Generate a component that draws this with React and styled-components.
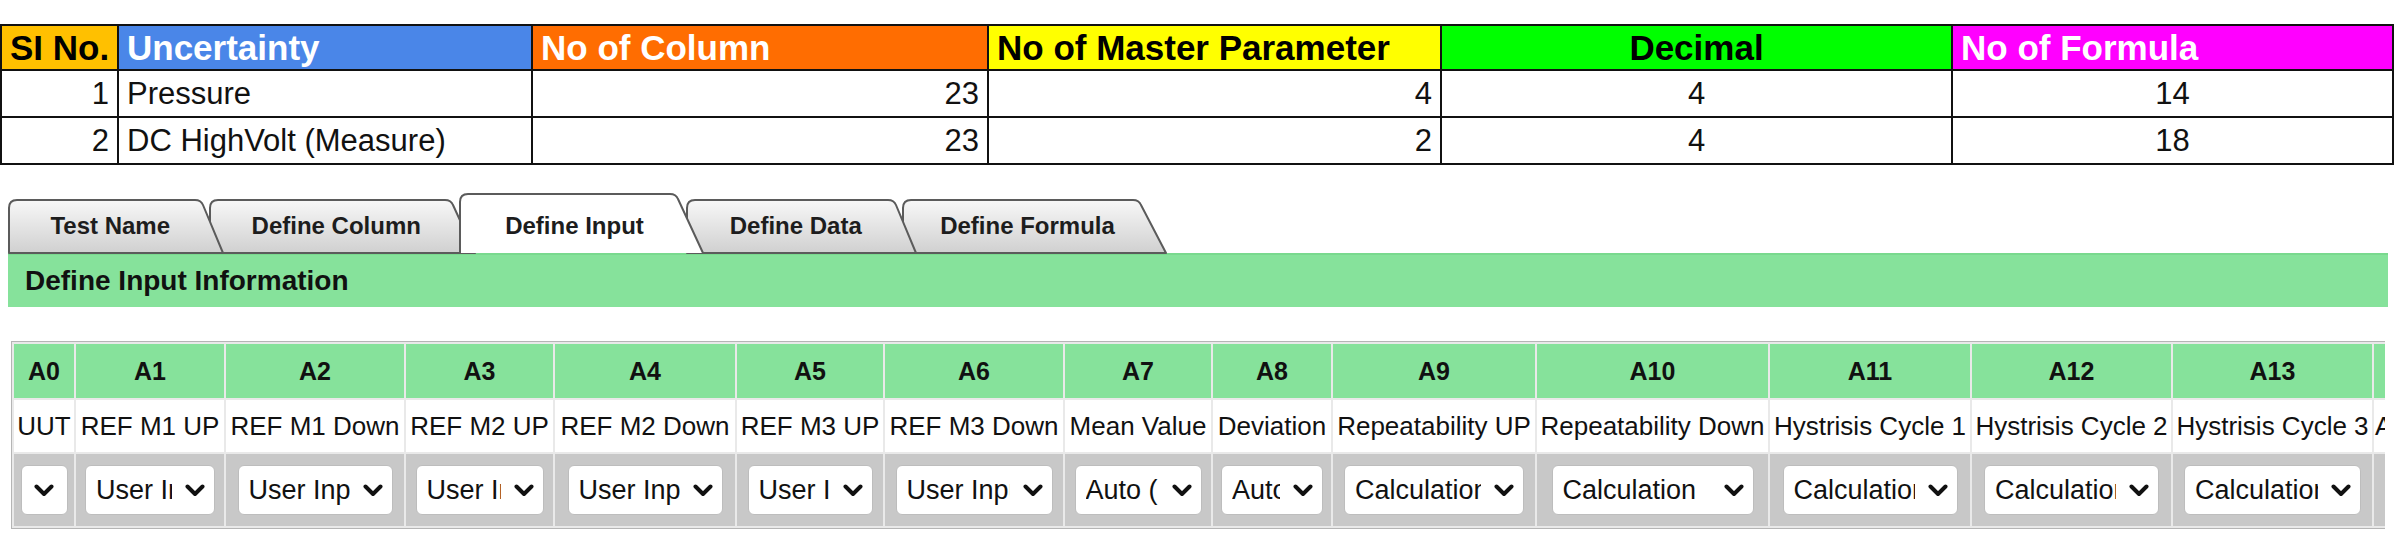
import styled, { createGlobalStyle } from "styled-components";

const GlobalStyle = createGlobalStyle`
  body {
    margin: 0;
    background: #fff;
    color: #111;
    font-family: "Liberation Sans", Arial, sans-serif;
  }
`;

const Page = styled.div`
  width: 2400px;
  padding-top: 24px;
`;

/* summary table */
const Summary = styled.table`
  width: 2392px;
  border-collapse: collapse;
  table-layout: fixed;
`;
const HeadCell = styled.th`
  box-sizing: border-box;
  width: ${(p) => p.$w}px;
  height: 45px;
  padding: 0 8px;
  border: 2px solid #111;
  background: ${(p) => p.$bg};
  color: ${(p) => p.$fg};
  text-align: ${(p) => p.$align || "left"};
  font-size: 35px;
  font-weight: bold;
  line-height: 1;
  white-space: nowrap;
  overflow: hidden;
`;
const Cell = styled.td`
  height: 45px;
  padding: 0 8px;
  border: 2px solid #111;
  text-align: ${(p) => p.$align || "left"};
  font-size: 31px;
  line-height: 1;
  white-space: nowrap;
`;

/* tabs */
const TabBar = styled.div`
  display: flex;
  align-items: flex-end;
  height: 60px;
  margin-top: 28px;
  padding-left: 8px;
`;
const TabItem = styled.div`
  position: relative;
  flex: none;
  box-sizing: border-box;
  width: ${(p) => p.$w}px;
  height: ${(p) => (p.$active ? 60 : 54)}px;
  margin-right: ${(p) => p.$mr}px;
  padding: ${(p) => (p.$active ? 6 : 0)}px ${(p) => p.$slant / 2}px 0 0;
  z-index: ${(p) => p.$z};
  display: flex;
  align-items: center;
  justify-content: center;
  font-size: 24px;
  font-weight: bold;
  color: #1d1d1d;
  cursor: pointer;
`;
const TabShape = styled.svg`
  position: absolute;
  left: 0;
  top: 0;
  width: 100%;
  height: 100%;
  overflow: visible;
`;
const TabLabel = styled.span`
  position: relative;
  white-space: nowrap;
`;

const InfoBar = styled.div`
  box-sizing: border-box;
  height: 54px;
  margin: 0 12px 0 8px;
  padding-left: 17px;
  display: flex;
  align-items: center;
  background: #86e29b;
  border-top: 2px solid #79d98e;
  font-size: 28px;
  font-weight: bold;
  color: #111;
`;

/* input grid */
const GridWrap = styled.div`
  width: 2374px;
  margin: 34px 0 0 11px;
  overflow: hidden;
`;
const Grid = styled.table`
  width: ${(p) => p.$total}px;
  table-layout: fixed;
  border-collapse: separate;
  border-spacing: 2px;
  background: #e9e9e9;
  border: 1px solid #b5b5b5;
`;
const ColHead = styled.th`
  width: ${(p) => p.$w}px;
  height: 54px;
  padding: 0;
  background: #86e29b;
  font-size: 25px;
  font-weight: bold;
  color: #111;
  text-align: center;
`;
const LabelCell = styled.td`
  height: 52px;
  padding: 0;
  background: #fff;
  font-size: 26px;
  color: #111;
  text-align: center;
  white-space: nowrap;
  overflow: hidden;
`;
const SelectCell = styled.td`
  height: 72px;
  padding: 0;
  background: #c8c8c8;
  text-align: center;
  overflow: hidden;
`;
const SelectWrap = styled.div`
  position: relative;
  display: inline-block;
  vertical-align: middle;
  width: ${(p) => p.$w}px;
  height: 50px;
`;
const Select = styled.select`
  appearance: none;
  box-sizing: border-box;
  width: 100%;
  height: 100%;
  padding: 0 ${(p) => (p.$empty ? 0 : 42)}px 0 10px;
  border: 1px solid #bdbdbd;
  border-radius: 6px;
  background: #fff;
  font-family: "Liberation Sans", Arial, sans-serif;
  font-size: 27px;
  color: #111;
  outline: none;
`;
const Chevron = styled.svg`
  position: absolute;
  right: ${(p) => p.$right}px;
  top: 50%;
  width: 20px;
  height: 13px;
  margin-top: -6px;
  pointer-events: none;
`;

const summaryHead = [
  { t: "SI No.", w: 117, bg: "#ffc000", fg: "#000" },
  { t: "Uncertainty", w: 414, bg: "#4a86e8", fg: "#fff" },
  { t: "No of Column", w: 456, bg: "#ff6d01", fg: "#fff" },
  { t: "No of Master Parameter", w: 453, bg: "#ffff00", fg: "#000" },
  { t: "Decimal", w: 511, bg: "#00ff00", fg: "#000", align: "center" },
  { t: "No of Formula", w: 441, bg: "#ff00ff", fg: "#fff" },
];
const summaryRows = [
  [1, "Pressure", 23, 4, 4, 14],
  [2, "DC HighVolt (Measure)", 23, 2, 4, 18],
];
const summaryAlign = ["right", "left", "right", "right", "center", "center"];

const tabs = [
  { t: "Test Name", w: 216, slant: 23, mr: -15, z: 5 },
  { t: "Define Column", w: 267, slant: 25, mr: -17, z: 4 },
  { t: "Define Input", w: 245, slant: 28, mr: -18, z: 10, active: true },
  { t: "Define Data", w: 231, slant: 23, mr: -15, z: 2 },
  { t: "Define Formula", w: 265, slant: 28, mr: 0, z: 1 },
];

const cols = [
  { h: "A0", l: "UUT", w: 62, sw: 47, v: "" },
  { h: "A1", l: "REF M1 UP", w: 150, sw: 130, v: "User Input" },
  { h: "A2", l: "REF M1 Down", w: 180, sw: 155, v: "User Input" },
  { h: "A3", l: "REF M2 UP", w: 149, sw: 128, v: "User Input" },
  { h: "A4", l: "REF M2 Down", w: 182, sw: 155, v: "User Input" },
  { h: "A5", l: "REF M3 UP", w: 148, sw: 125, v: "User Input" },
  { h: "A6", l: "REF M3 Down", w: 180, sw: 157, v: "User Input" },
  { h: "A7", l: "Mean Value", w: 148, sw: 127, v: "Auto (Mean)" },
  { h: "A8", l: "Deviation", w: 120, sw: 102, v: "Auto (Deviation)" },
  { h: "A9", l: "Repeatability UP", w: 204, sw: 180, v: "Calculation" },
  { h: "A10", l: "Repeatability Down", w: 233, sw: 202, v: "Calculation" },
  { h: "A11", l: "Hystrisis Cycle 1", w: 202, sw: 175, v: "Calculation" },
  { h: "A12", l: "Hystrisis Cycle 2", w: 201, sw: 175, v: "Calculation" },
  { h: "A13", l: "Hystrisis Cycle 3", w: 201, sw: 177, v: "Calculation" },
  { h: "A14", l: "Average Hystrisis", w: 206, sw: 175, v: "Calculation" },
];

function Tab({ t, w, slant, mr, z, active }) {
  const h = active ? 60 : 54;
  const id = `tabfill-${t.replace(/\s/g, "")}`;
  const d = `M1 ${h} L1 9 Q1 1 9 1 L${w - slant - 6} 1 Q${w - slant} 1 ${w - slant + 2} 6 L${w - 1} ${h}${active ? "" : " Z"}`;
  return (
    <TabItem $w={w} $slant={slant} $mr={mr} $z={z} $active={active}>
      <TabShape viewBox={`0 0 ${w} ${h}`}>
        <defs>
          <linearGradient id={id} x1="0" y1="0" x2="0" y2="1">
            <stop offset="0" stopColor={active ? "#fff" : "#f8f8f8"} />
            <stop offset="1" stopColor={active ? "#fff" : "#d0d0d0"} />
          </linearGradient>
        </defs>
        <path d={d} fill={`url(#${id})`} stroke="#5b5b5b" strokeWidth="2" strokeLinejoin="round" />
      </TabShape>
      <TabLabel>{t}</TabLabel>
    </TabItem>
  );
}

const App = () => {
  const total = cols.reduce((s, c) => s + c.w, 0) + 4;
  return (
    <Page>
      <GlobalStyle />
      <Summary>
        <thead>
          <tr>
            {summaryHead.map((c) => (
              <HeadCell key={c.t} $w={c.w} $bg={c.bg} $fg={c.fg} $align={c.align}>
                {c.t}
              </HeadCell>
            ))}
          </tr>
        </thead>
        <tbody>
          {summaryRows.map((r) => (
            <tr key={r[0]}>
              {r.map((v, i) => (
                <Cell key={i} $align={summaryAlign[i]}>
                  {v}
                </Cell>
              ))}
            </tr>
          ))}
        </tbody>
      </Summary>

      <TabBar>
        {tabs.map((t) => (
          <Tab key={t.t} {...t} />
        ))}
      </TabBar>
      <InfoBar>Define Input Information</InfoBar>

      <GridWrap>
        <Grid $total={total}>
          <thead>
            <tr>
              {cols.map((c) => (
                <ColHead key={c.h} $w={c.w - 2}>
                  {c.h}
                </ColHead>
              ))}
            </tr>
          </thead>
          <tbody>
            <tr>
              {cols.map((c) => (
                <LabelCell key={c.h}>{c.l}</LabelCell>
              ))}
            </tr>
            <tr>
              {cols.map((c) => (
                <SelectCell key={c.h}>
                  <SelectWrap $w={c.sw}>
                    <Select defaultValue={c.v} $empty={!c.v}>
                      <option value="">{""}</option>
                      <option value="User Input">User Input</option>
                      <option value="Auto (Mean)">Auto (Mean)</option>
                      <option value="Auto (Deviation)">Auto (Deviation)</option>
                      <option value="Calculation">Calculation</option>
                    </Select>
                    <Chevron viewBox="0 0 20 13" $right={c.v ? 10 : 14}>
                      <path d="M2.5 2.5 L10 10 L17.5 2.5" fill="none" stroke="#111" strokeWidth="4" strokeLinecap="round" strokeLinejoin="round" />
                    </Chevron>
                  </SelectWrap>
                </SelectCell>
              ))}
            </tr>
          </tbody>
        </Grid>
      </GridWrap>
    </Page>
  );
};

export default App;
